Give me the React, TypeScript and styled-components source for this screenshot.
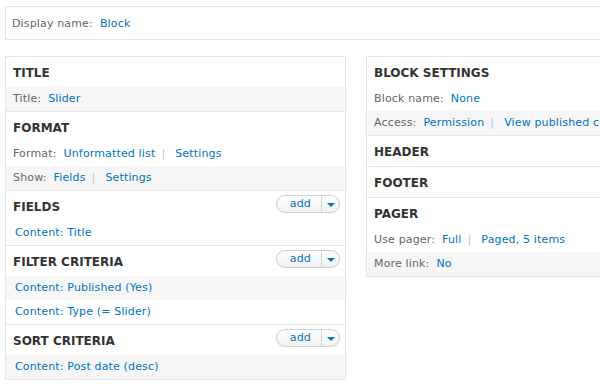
import React, { FC } from 'react';
import styled, { createGlobalStyle } from 'styled-components';

const GlobalStyle = createGlobalStyle`
  html, body {
    margin: 0;
    padding: 0;
    overflow: hidden;
    background: #fff;
  }
  body {
    font-family: "DejaVu Sans", Verdana, sans-serif;
    font-size: 11px;
    letter-spacing: 0.15px;
    color: #666;
  }
`;

const Page = styled.div`
  width: 702px;
  padding: 6px 0 0 5px;
`;

const DisplayBar = styled.div`
  border: 1px solid #e6e6e6;
  padding: 9px 6px 7px;
  line-height: 16px;
`;

const Columns = styled.div`
  display: grid;
  grid-template-columns: 341px 341px;
  column-gap: 20px;
  align-items: start;
  margin-top: 16px;
`;

const Column = styled.div`
  border: 1px solid #e6e6e6;
`;

const Section = styled.div`
  & + & {
    border-top: 1px solid #e6e6e6;
  }
`;

const SectionHeader = styled.div`
  display: flex;
  justify-content: space-between;
  align-items: flex-start;
  padding: 8px 5px 6px 7px;
`;

const SectionTitle = styled.h3`
  margin: 0;
  font-size: 12px;
  line-height: 16px;
  font-weight: bold;
  letter-spacing: 0;
  text-transform: uppercase;
  color: #333;
`;

const Row = styled.div<{ $shaded?: boolean; $field?: boolean }>`
  padding: 4px 7px 4px ${(p) => (p.$field ? '9px' : '7px')};
  line-height: 16px;
  white-space: nowrap;
  background: ${(p) => (p.$shaded ? '#f6f6f6' : '#fff')};
`;

const Label = styled.span`
  color: #666;
  margin-right: 7px;
`;

const Link = styled.a`
  color: #0074bd;
  text-decoration: none;
`;

const Sep = styled.span`
  color: #a9c6de;
  margin: 0 10px 0 6px;
`;

const AddButton = styled.div`
  display: flex;
  align-items: stretch;
  height: 16px;
  margin-top: -4px;
  border: 1px solid #cfcfcf;
  border-radius: 10px;
  background: linear-gradient(#ffffff, #f1f1f1);
  overflow: hidden;
`;

const AddLabel = styled.span`
  padding: 0 10px 0 13px;
  line-height: 16px;
  color: #0074bd;
`;

const AddArrow = styled.span`
  display: flex;
  align-items: center;
  justify-content: center;
  width: 17px;
  border-left: 1px solid #d6d6d6;
`;

const Triangle = styled.span`
  width: 0;
  height: 0;
  border-left: 4px solid transparent;
  border-right: 4px solid transparent;
  border-top: 4px solid #0074bd;
  margin-top: 1px;
`;

const Add: FC = () => (
  <AddButton>
    <AddLabel>add</AddLabel>
    <AddArrow>
      <Triangle />
    </AddArrow>
  </AddButton>
);

type Item = { label?: string; links: string[]; shaded?: boolean };

const Setting: FC<Item> = ({ label, links, shaded }) => (
  <Row $shaded={shaded} $field={!label}>
    {label && <Label>{label}:</Label>}
    {links.map((l, i) => (
      <React.Fragment key={l}>
        {i > 0 && <Sep>|</Sep>}
        <Link href="#">{l}</Link>
      </React.Fragment>
    ))}
  </Row>
);

type Block = { title: string; add?: boolean; items: Item[] };

const leftBlocks: Block[] = [
  { title: 'Title', items: [{ label: 'Title', links: ['Slider'], shaded: true }] },
  {
    title: 'Format',
    items: [
      { label: 'Format', links: ['Unformatted list', 'Settings'] },
      { label: 'Show', links: ['Fields', 'Settings'], shaded: true },
    ],
  },
  { title: 'Fields', add: true, items: [{ links: ['Content: Title'] }] },
  {
    title: 'Filter criteria',
    add: true,
    items: [
      { links: ['Content: Published (Yes)'], shaded: true },
      { links: ['Content: Type (= Slider)'] },
    ],
  },
  { title: 'Sort criteria', add: true, items: [{ links: ['Content: Post date (desc)'], shaded: true }] },
];

const rightBlocks: Block[] = [
  {
    title: 'Block settings',
    items: [
      { label: 'Block name', links: ['None'] },
      { label: 'Access', links: ['Permission', 'View published content'], shaded: true },
    ],
  },
  { title: 'Header', items: [] },
  { title: 'Footer', items: [] },
  {
    title: 'Pager',
    items: [
      { label: 'Use pager', links: ['Full', 'Paged, 5 items'] },
      { label: 'More link', links: ['No'], shaded: true },
    ],
  },
];

const BlockColumn: FC<{ blocks: Block[] }> = ({ blocks }) => (
  <Column>
    {blocks.map((b) => (
      <Section key={b.title}>
        <SectionHeader>
          <SectionTitle>{b.title}</SectionTitle>
          {b.add && <Add />}
        </SectionHeader>
        {b.items.map((it, i) => (
          <Setting key={i} {...it} />
        ))}
      </Section>
    ))}
  </Column>
);

const App: FC = () => (
  <>
    <GlobalStyle />
    <Page>
      <DisplayBar>
        <Label>Display name:</Label>
        <Link href="#">Block</Link>
      </DisplayBar>
      <Columns>
        <BlockColumn blocks={leftBlocks} />
        <BlockColumn blocks={rightBlocks} />
      </Columns>
    </Page>
  </>
);

export default App;
